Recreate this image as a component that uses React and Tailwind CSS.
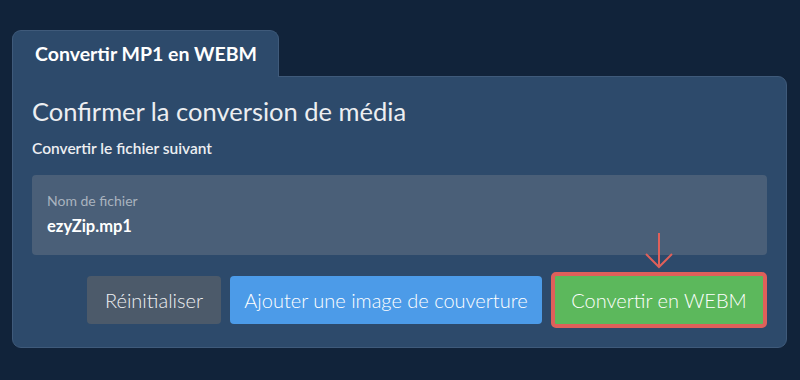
export default function App() {
  return (
    <div className="min-h-screen bg-[#11233a] pl-[12px] pt-[30px] font-['Lato','Noto_Sans',sans-serif] text-[#e9ecf0]">
      <div className="w-[775px]">
        {/* Tab */}
        <div className="relative z-10 -mb-px flex h-[47px] w-[267px] items-center rounded-t-[9px] border border-b-0 border-[#3f5a7a] bg-[#2d4a6b] pl-[22px] text-[19.5px] font-bold text-white">
          Convertir MP1 en WEBM
        </div>

        {/* Panel */}
        <div className="rounded-b-[9px] rounded-tr-[9px] border border-[#3f5a7a] bg-[#2d4a6b] px-[19px] pt-[19px] pb-[19px]">
          <h2 className="text-[25.5px] leading-[30px] font-normal text-[#eceef1]">
            Confirmer la conversion de média
          </h2>
          <p className="mt-[12px] text-[15.5px] leading-[20px] font-semibold text-[#eceef1]">
            Convertir le fichier suivant
          </p>

          <div className="mt-[17px] rounded-[4px] bg-[#4a5f78] px-[15px] pt-[17px] pb-[18px]">
            <div className="text-[14px] leading-[18px] text-[#a9b3bf]">Nom de fichier</div>
            <div className="mt-[5px] text-[16.5px] leading-[22px] font-bold text-white">ezyZip.mp1</div>
          </div>

          <div className="mt-[17px] flex items-center justify-end gap-[9px]">
            <button className="h-[48px] w-[134px] rounded-[4px] bg-[#4c5a6a] text-[20px] font-light text-[#eef0f3]">
              Réinitialiser
            </button>
            <button className="h-[48px] w-[312px] rounded-[4px] bg-[#4c9be8] text-[20px] font-light text-white">
              Ajouter une image de couverture
            </button>
            <div className="relative">
              <svg
                className="absolute bottom-full left-1/2 mb-[3px] -translate-x-1/2"
                width="30"
                height="36"
                viewBox="0 0 30 36"
                fill="none"
                stroke="#df605a"
                strokeWidth="2"
              >
                <line x1="15" y1="0" x2="15" y2="34" />
                <polyline points="2,21 15,34 28,21" />
              </svg>
              <button className="h-[56px] w-[216px] rounded-[5px] border-[4px] border-[#df605a] bg-[#5cb85c] text-[20px] font-light text-white">
                Convertir en WEBM
              </button>
            </div>
          </div>
        </div>
      </div>
    </div>
  );
}
